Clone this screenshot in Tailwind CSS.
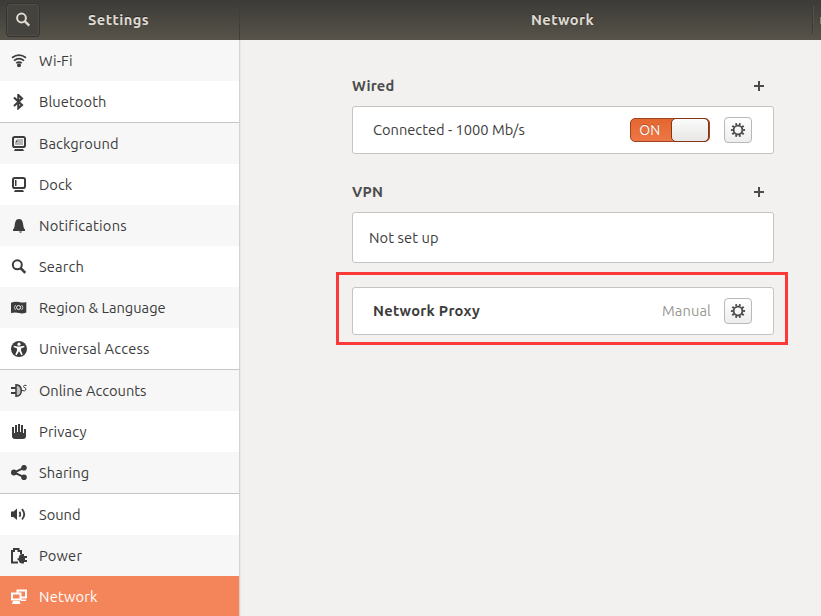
<!DOCTYPE html>
<html lang="en">
<head>
<meta charset="utf-8">
<title>Settings</title>
<script src="https://cdn.jsdelivr.net/npm/@tailwindcss/browser@4"></script>
</head>
<body class="w-[821px] h-[616px] overflow-hidden bg-[#f2f1f0] font-['Ubuntu','Noto_Sans',sans-serif] text-[14.667px] leading-5 text-[#3c3c3c] flex flex-col">
<svg class="hidden"><symbol id="gear" viewBox="0 0 16 16" fill="none" stroke="#4c4c4c"><circle cx="8" cy="8" r="4.400" stroke-width="1.900"/><circle cx="8" cy="8" r="6" stroke-width="2.200" pathLength="100" stroke-dasharray="5 5" stroke-dashoffset="2.500"/></symbol></svg>
<header class="h-10 shrink-0 flex bg-linear-to-b from-[#3c3b37] to-[#57534a] text-[#dfdbd2] font-bold [text-shadow:0_-1px_0_#2b2a27]">
  <div class="w-[240px] h-10 flex items-center border-r border-[#403e39]">
    <button class="ml-[6px] size-[34px] rounded-[4px] border border-[#34332f] bg-[#45433e] shadow-[inset_0_0_0_1px_#504e48] flex items-center justify-center" aria-label="Search">
      <svg width="16" height="16" viewBox="0 0 16 16" fill="none" stroke="#dfdbd2" stroke-width="2"><circle cx="6.5" cy="6" r="4.4"/><path d="M9.7 9.2 14.2 13.7" stroke-width="2.4"/></svg>
    </button>
    <h1 class="ml-[48px] tracking-[0.45px]">Settings</h1>
  </div>
  <div class="flex-1 flex items-center justify-between">
    <h1 class="ml-[291px] tracking-[0.4px]">Network</h1>
    <div class="h-7 w-[9px] border-l border-[#3d3b37] shadow-[inset_1px_0_0_#55524b] overflow-hidden flex items-center justify-end"><span class="w-[1px] h-[7px] bg-[#85827a]"></span></div>
  </div>
</header>
<div class="flex flex-1 min-h-0">
  <nav class="w-[240px] shrink-0 border-r border-[#d5d2cf] bg-white shadow-[1px_0_0_#e9e8e6]">
    <ul class="[&>li]:h-[41px] [&>li]:flex [&>li]:items-center [&>li]:pl-[11px] [&>li]:gap-3 [&_svg]:shrink-0">
      <li class="bg-[#f7f7f7]"><svg width="16" height="16" viewBox="0 0 16 16" fill="none" stroke="#3c3c3c" stroke-width="1.7"><path d="M1 4.8Q8 -.5 15 4.8M3 7.7Q8 3.7 13 7.700M5.200 10.100Q8 8 10.800 10.100"/><circle cx="8" cy="12.300" r="2" fill="#3c3c3c" stroke="none"/></svg><span class="tracking-[0.15px]">Wi-Fi</span></li>
      <li class="bg-white"><svg width="16" height="16" viewBox="0 0 16 16" fill="none" stroke="#3c3c3c" stroke-width="2.100"><path d="M3 3.500 11 11 7.300 14.300V1L11 4.500 3 12"/></svg><span class="tracking-[0.1px]">Bluetooth</span></li>
      <li class="bg-[#f7f7f7] border-t border-[#c6c6c6] h-[42px]!"><svg width="16" height="16" viewBox="0 0 16 16"><rect x="2" y="1" width="12" height="10" rx="1.800" fill="#f7f7f7" stroke="#3c3c3c" stroke-width="2"/><path d="M7 3h5v6H4V7h3z" fill="#b4b4b4"/><path d="M6.500 3v3.500H4z" fill="#3c3c3c"/><path d="M4 13h8l1 2H3z" fill="#3c3c3c"/></svg><span class="tracking-[0.1px]">Background</span></li>
      <li class="bg-white"><svg width="16" height="16" viewBox="0 0 16 16"><rect x="2" y="1" width="12" height="10" rx="1.800" fill="none" stroke="#3c3c3c" stroke-width="2"/><path d="M4 3h1.500v6H4z" fill="#3c3c3c"/><path d="M4 13h8l1 2H3z" fill="#3c3c3c"/></svg><span>Dock</span></li>
      <li class="bg-[#f7f7f7]"><svg width="16" height="16" viewBox="0 0 16 16" fill="#3c3c3c"><path d="M8 1C4.500 1 4 4.500 3.700 7.500 3.500 10 2.500 10.700 2 11.500V13h12v-1.500c-.500-.800-1.500-1.500-1.700-4C12 4.500 11.500 1 8 1zM8 13.500h3q-.500 1.200-1.500 1.200T8 13.500z"/></svg><span class="tracking-[0.22px]">Notifications</span></li>
      <li class="bg-white"><svg width="16" height="16" viewBox="0 0 16 16" fill="none" stroke="#3c3c3c" stroke-width="2"><circle cx="6.300" cy="5.800" r="4.500"/><path d="M9.500 9 14.300 13.800" stroke-width="2.500"/></svg><span class="tracking-[0.15px]">Search</span></li>
      <li class="bg-[#f7f7f7]"><svg width="16" height="16" viewBox="0 0 16 16"><path d="M0 2.700Q4 1 8 2T15.300 2V12.500Q11.500 14 8 13T0 13z" fill="#3c3c3c"/><circle cx="7.600" cy="7.500" r="2" fill="none" stroke="#f7f7f7"/><path d="M4.500 5Q2.200 7.500 4.500 10M10.700 5Q13 7.500 10.700 10" fill="none" stroke="#d7d7d7" stroke-width=".9"/></svg><span>Region &amp; Language</span></li>
      <li class="bg-white"><svg width="16" height="16" viewBox="0 0 16 16"><circle cx="8" cy="8" r="8" fill="#3c3c3c"/><circle cx="8" cy="3.200" r="1.600" fill="#fff"/><path d="M2.800 4.800 6.500 5.500h3l3.700-.7.300 1.300-3.500 1.400v2l1.700 4-1.300.7L8 10.200 5.600 14.200l-1.300-.7L6 9.500v-2L2.500 6.100z" fill="#fff"/></svg><span class="tracking-[0.18px]">Universal Access</span></li>
      <li class="bg-[#f7f7f7] border-t border-[#c6c6c6] h-[42px]!"><svg width="16" height="16" viewBox="0 0 16 16" fill="none" stroke="#3c3c3c"><path d="M0 5h5M0 10h5" stroke-width="2"/><path d="M5 1.700Q10.300 2 10.300 7.500T5 13.300z" fill="#c0c0c0" stroke-width="1.500"/><path d="M15.500 2.500Q12.500 1.500 12.500 3.500 12.500 4.500 14 4.800 15.500 5.500 14.800 7T11 7.500"/></svg><span>Online Accounts</span></li>
      <li class="bg-white"><svg width="16" height="16" viewBox="0 0 16 16" fill="#3c3c3c"><path d="M1 3h2v6h1V1h2v7h1V0h2v8h1V1h2v8h1V5h2v7q0 3-3 3H4q-3 0-3-3z"/></svg><span class="tracking-[0.15px]">Privacy</span></li>
      <li class="bg-[#f7f7f7]"><svg width="16" height="16" viewBox="0 0 16 16" fill="#3c3c3c"><path d="M13 2.800 3 7.500 13 12.200" fill="none" stroke="#3c3c3c" stroke-width="2"/><circle cx="2.900" cy="7.500" r="2.900"/><circle cx="13" cy="2.700" r="2.800"/><circle cx="13" cy="12.300" r="2.800"/></svg><span class="tracking-[0.1px]">Sharing</span></li>
      <li class="bg-white border-t border-[#c6c6c6] h-[42px]!"><svg width="16" height="16" viewBox="0 0 16 16" fill="#3c3c3c"><path d="M0 4.500h2.500L6 1.500v11.500L2.500 10H0z"/><path d="M8.500 4.800Q10 7.300 8.500 9.800M11 2.200Q15.500 7.300 11 12.400" fill="none" stroke="#3c3c3c" stroke-width="1.800"/></svg><span>Sound</span></li>
      <li class="bg-[#f7f7f7]"><svg width="16" height="16" viewBox="0 0 16 16" fill="#3c3c3c"><path d="M7 14.500H1V3h2V1h4.500v2H10v3" fill="none" stroke="#3c3c3c" stroke-width="2"/><path d="M6.500 10.200h1.200Q8 6 11.500 6H13v2h3v2h-2v2h2v2h-3v1.500h-1.500Q8.200 15.500 7.700 12.200H6.500z"/></svg><span class="tracking-[0.2px]">Power</span></li>
      <li class="bg-[#f48459] text-white"><svg width="16" height="16" viewBox="0 0 16 16"><path d="M6.500 1.500h8.500v7H6.500z" fill="none" stroke="#fff" stroke-width="2"/><path d="M10 10.500h5v1.500h-5z" fill="#fff"/><path d="M1 4.500h8.500v6H1z" fill="#f48459" stroke="#fff" stroke-width="2"/><path d="M2 12h6.500l1 3H1z" fill="#fff"/></svg><span class="tracking-[0.2px]">Network</span></li>
    </ul>
  </nav>
  <main class="flex-1 pl-[112px] pt-9">
    <section class="w-[422px]">
      <div class="h-5 flex items-center justify-between pr-[9px] text-[#4c4c4c]"><h2 class="font-bold tracking-[0.15px]">Wired</h2><svg width="12" height="12" viewBox="0 0 12 12"><path d="M1 6h10M6 1v10" stroke="#4c4c4c" stroke-width="2"/></svg></div>
      <div class="mt-[10px] h-12 bg-white border border-[#c6c3c0] rounded-[3px] flex items-center pl-5 pr-[21px]">
        <span class="flex-1">Connected - 1000 Mb/s</span>
        <div class="w-[80px] h-6 rounded-[5px] border border-[#9d4420] bg-linear-to-b from-[#e4662f] to-[#ee7745] flex">
          <span class="w-10 pr-[2px] text-center text-white leading-[22px] text-[14px] [text-shadow:0_-1px_0_#b34d24]">ON</span>
          <span class="w-[39px] h-6 -mt-px rounded-[5px] border border-[#843617] bg-linear-to-b from-[#fbfbfb] to-[#e8e7e6]"></span>
        </div>
        <button class="ml-[14px] w-7 h-[26px] rounded-[4px] border border-[#bab8b6] bg-linear-to-b from-white to-[#ededed] flex items-center justify-center" aria-label="Options"><svg width="16" height="16"><use href="#gear"/></svg></button>
      </div>
    </section>
    <section class="w-[422px] mt-7">
      <div class="h-5 flex items-center justify-between pr-[9px] text-[#4c4c4c]"><h2 class="font-bold tracking-[0.2px]">VPN</h2><svg width="12" height="12" viewBox="0 0 12 12"><path d="M1 6h10M6 1v10" stroke="#4c4c4c" stroke-width="2"/></svg></div>
      <div class="mt-[10px] h-[51px] bg-white border border-[#c6c3c0] rounded-[3px] flex items-center px-4"><span class="tracking-[0.1px]">Not set up</span></div>
    </section>
    <section class="w-[452px] h-[73px] -ml-4 mt-[9px] border-3 border-[#fb3939] p-3 pl-[13px]">
      <div class="w-[422px] h-12 bg-white border border-[#c6c3c0] rounded-[3px] flex items-center pl-5 pr-[21px]">
        <span class="flex-1 font-bold tracking-[0.27px]">Network Proxy</span>
        <span class="text-[#9a9791] tracking-[0.1px]">Manual</span>
        <button class="ml-[13px] w-7 h-[26px] rounded-[4px] border border-[#bab8b6] bg-linear-to-b from-white to-[#ededed] flex items-center justify-center" aria-label="Options"><svg width="16" height="16"><use href="#gear"/></svg></button>
      </div>
    </section>
  </main>
</div>
</body>
</html>
